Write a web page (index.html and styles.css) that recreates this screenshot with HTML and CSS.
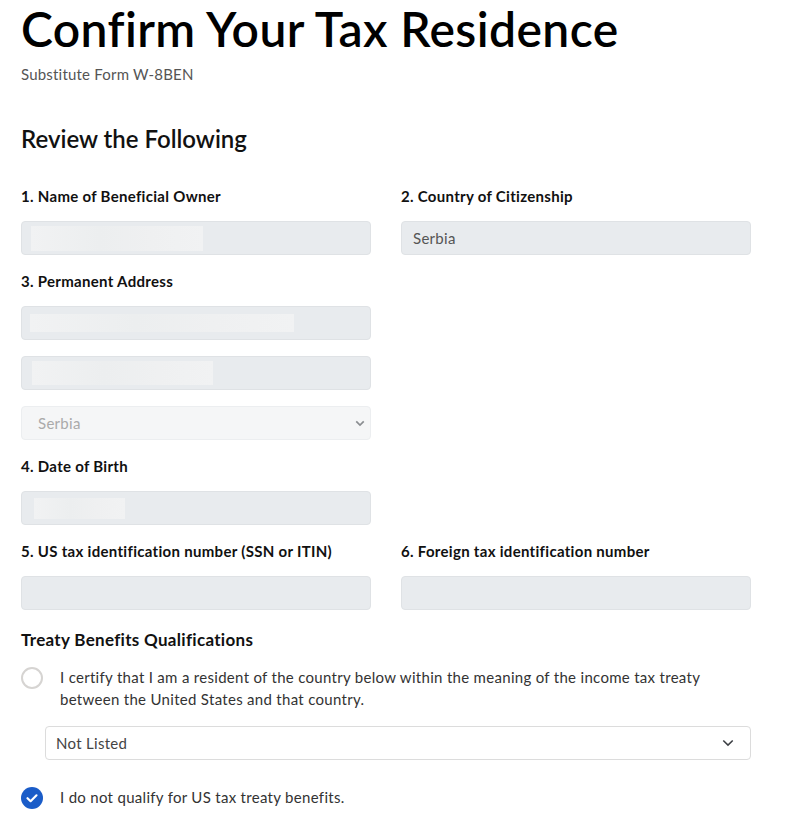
FILE: index.html
```html
<!DOCTYPE html>
<html lang="en">
<head>
<meta charset="utf-8">
<title>Confirm Your Tax Residence</title>
<link rel="stylesheet" href="styles.css">
</head>
<body>
<main class="page">
  <h1 class="title">Confirm Your Tax Residence</h1>
  <p class="subtitle">Substitute Form W-8BEN</p>

  <h2 class="section-title">Review the Following</h2>

  <div class="grid">
    <div class="field">
      <label class="label">1. Name of Beneficial Owner</label>
      <div class="input"><span class="redact redact-name"></span></div>
    </div>
    <div class="field">
      <label class="label">2. Country of Citizenship</label>
      <div class="input"><span class="value">Serbia</span></div>
    </div>

    <div class="field">
      <label class="label">3. Permanent Address</label>
      <div class="stack">
        <div class="input"><span class="redact redact-addr1"></span></div>
        <div class="input"><span class="redact redact-addr2"></span></div>
        <div class="select disabled"><span class="value">Serbia</span>
          <svg class="chev small" viewBox="0 0 12 8" width="10" height="7"><path d="M1.5 1.5 L6 6 L10.5 1.5" fill="none" stroke="#8a8d91" stroke-width="2"/></svg>
        </div>
      </div>
    </div>
    <div class="field"></div>

    <div class="field">
      <label class="label">4. Date of Birth</label>
      <div class="input"><span class="redact redact-dob"></span></div>
    </div>
    <div class="field"></div>

    <div class="field">
      <label class="label">5. US tax identification number (SSN or ITIN)</label>
      <div class="input"></div>
    </div>
    <div class="field">
      <label class="label">6. Foreign tax identification number</label>
      <div class="input"></div>
    </div>
  </div>

  <h3 class="sub-heading">Treaty Benefits Qualifications</h3>

  <div class="option">
    <span class="radio"></span>
    <p class="option-text">I certify that I am a resident of the country below within the meaning of the income tax treaty between the United States and that country.</p>
  </div>
  <div class="select treaty"><span class="value">Not Listed</span>
    <svg class="chev" viewBox="0 0 14 9" width="12" height="8"><path d="M1.5 1.5 L7 7 L12.5 1.5" fill="none" stroke="#3c3f44" stroke-width="1.8"/></svg>
  </div>

  <div class="option checked-option">
    <span class="check"><svg viewBox="0 0 22 22" width="22" height="22"><circle cx="11" cy="11" r="11" fill="#1a5cc8"/><path d="M6.5 11.2 L9.6 14.2 L15.5 8.3" fill="none" stroke="#fff" stroke-width="2.2" stroke-linecap="round" stroke-linejoin="round"/></svg></span>
    <p class="option-text">I do not qualify for US tax treaty benefits.</p>
  </div>
</main>
</body>
</html>
```

FILE: styles.css
```css
* { box-sizing: border-box; }
html, body { margin: 0; padding: 0; background: #fff; }
body {
  font-family: "Lato", "Liberation Sans", sans-serif;
  color: #111;
  letter-spacing: 0.3px;
}
.page {
  padding: 0 0 0 21px;
  width: 751px;
}
.title {
  margin: 0;
  padding-top: 3px;
  font-size: 48px;
  line-height: 52px;
  font-weight: 600;
  color: #000;
  letter-spacing: 0.4px;
}
.subtitle {
  margin: 10px 0 0;
  font-size: 15px;
  line-height: 18px;
  color: #555;
  letter-spacing: 0.2px;
}
.section-title {
  margin: 41px 0 0;
  font-size: 24px;
  line-height: 30px;
  font-weight: 600;
  color: #111;
  letter-spacing: 0;
}
.grid {
  margin-top: 32px;
  display: grid;
  grid-template-columns: 350px 350px;
  column-gap: 30px;
  row-gap: 16px;
}
.field { display: flex; flex-direction: column; }
.label {
  font-size: 15px;
  line-height: 20px;
  font-weight: 700;
  color: #111;
  margin-bottom: 15px;
}
.stack { display: flex; flex-direction: column; gap: 16px; }
.input, .select {
  height: 34px;
  border: 1px solid #dfe2e5;
  border-radius: 4px;
  background: #e8ebee;
  display: flex;
  align-items: center;
  padding: 0 11px;
}
.value {
  font-size: 15px;
  color: #555;
}
.redact {
  display: block;
  background: linear-gradient(90deg, #f1f2f3 0%, #eceeef 40%, #eff0f1 70%, #f1f2f3 100%);
  filter: blur(0.6px);
}
.redact-name { width: 172px; height: 25px; margin-left: -2px; }
.redact-addr1 { width: 264px; height: 18px; margin-left: -3px; }
.redact-addr2 { width: 181px; height: 24px; margin-left: -1px; }
.redact-dob { width: 91px; height: 21px; margin-left: 1px; }
.select { justify-content: space-between; padding: 0 5px 0 16px; }
.select.disabled {
  background: #f5f6f7;
  border-color: #eceef0;
}
.select.disabled .value { color: #aaa; }
.sub-heading {
  margin: 19px 0 0;
  font-size: 17px;
  line-height: 22px;
  font-weight: 700;
  color: #111;
}
.option {
  display: flex;
  align-items: flex-start;
  gap: 17px;
  margin-top: 15px;
}
.radio {
  flex: none;
  width: 22px;
  height: 22px;
  border: 2px solid #d6d4d2;
  border-radius: 50%;
  margin-top: 1px;
}
.option-text {
  margin: 0;
  font-size: 15px;
  line-height: 22px;
  color: #333;
  max-width: 680px;
}
.select.treaty {
  margin: 16px 0 0 24px;
  background: #fff;
  border-color: #dcdcdc;
  padding: 0 16px 0 10px;
}
.select.treaty .value { color: #444; }
.checked-option { margin-top: 26px; align-items: flex-start; }
.check { flex: none; width: 22px; height: 22px; display: block; margin-top: 1px; }
.check svg { display: block; }
.chev { display: block; }
```
